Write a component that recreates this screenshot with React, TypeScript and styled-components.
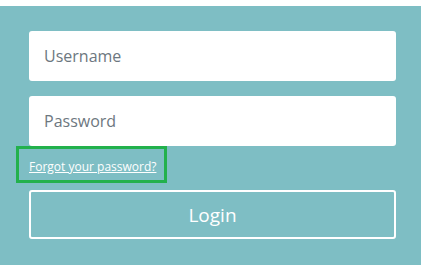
import React from "react";
import styled, { createGlobalStyle } from "styled-components";

const GlobalStyle = createGlobalStyle`
  html, body {
    margin: 0;
    padding: 0;
    background: #ffffff;
  }
  body {
    font-family: "Open Sans", "Noto Sans", "Liberation Sans", sans-serif;
  }
`;

const Panel = styled.form`
  box-sizing: border-box;
  margin-top: 6px;
  width: 421px;
  height: 259px;
  padding: 25px 25px 26px 29px;
  background: #7ebec4;
  display: flex;
  flex-direction: column;
`;

const Field = styled.input<{ $gap?: number }>`
  box-sizing: border-box;
  width: 100%;
  height: 50px;
  margin-bottom: ${(p) => p.$gap ?? 0}px;
  padding: 0 15px;
  border: none;
  border-radius: 3px;
  background: #ffffff;
  font-family: inherit;
  font-size: 16px;
  color: #333;
  outline: none;

  &::placeholder {
    color: #6d7780;
    opacity: 1;
  }
`;

const Highlight = styled.div`
  box-sizing: border-box;
  align-self: flex-start;
  margin-left: -13px;
  width: 151px;
  height: 37px;
  border: 3px solid #22b14c;
  padding: 0 0 0 10px;
  display: flex;
  align-items: center;
`;

const ForgotLink = styled.a`
  font-size: 12px;
  color: #ffffff;
  text-decoration: underline;
  white-space: nowrap;
  margin-top: 3px;
`;

const LoginButton = styled.button`
  box-sizing: border-box;
  margin-top: 7px;
  width: 100%;
  height: 49px;
  border: 2px solid #ffffff;
  border-radius: 3px;
  background: transparent;
  color: #ffffff;
  font-family: inherit;
  font-size: 19px;
  cursor: pointer;
`;

export default function App() {
  return (
    <>
      <GlobalStyle />
      <Panel onSubmit={(e) => e.preventDefault()}>
        <Field type="text" placeholder="Username" $gap={15} />
        <Field type="password" placeholder="Password" />
        <Highlight>
          <ForgotLink href="#">Forgot your password?</ForgotLink>
        </Highlight>
        <LoginButton type="submit">Login</LoginButton>
      </Panel>
    </>
  );
}
